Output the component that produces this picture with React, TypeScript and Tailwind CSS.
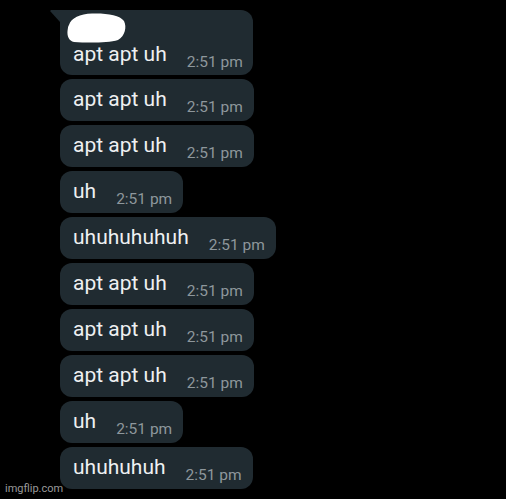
import React from "react";

const msgs = [
  "apt apt uh",
  "apt apt uh",
  "apt apt uh",
  "uh",
  "uhuhuhuhuh",
  "apt apt uh",
  "apt apt uh",
  "apt apt uh",
  "uh",
  "uhuhuhuh",
];

function Bubble({ text, first }: { text: string; first?: boolean }) {
  return (
    <div
      className={
        first
          ? "relative flex items-end h-[65px] pl-[13px] pr-[10px] rounded-[12px] rounded-tl-none bg-[#202b31]"
          : "relative flex items-end h-[42px] pl-[13px] pr-[11px] rounded-[12px] bg-[#202b31]"
      }
    >
      {first && (
        <>
          <svg
            className="absolute left-[-10px] top-0"
            width="10"
            height="12"
            viewBox="0 0 10 12"
          >
            <path d="M1 0 H10 V12 L0.5 1.5 Q0 0 1 0 Z" fill="#202b31" />
          </svg>
          <svg
            className="absolute left-[6px] top-[2px]"
            width="61"
            height="32"
            viewBox="0 0 61 32"
          >
            <path
              d="M3 13 C5 6 14 2 26 1.5 C40 1 54 3 58 9 C61 15 59 24 52 28 C42 31 22 31 8 30 C3 29 1 24 1.5 19 C2 16 2 14 3 13 Z"
              fill="#ffffff"
            />
          </svg>
        </>
      )}
      <span
        className={
          first
            ? "text-[21px] leading-[21px] text-[#eef0f1] mb-[10px] whitespace-pre"
            : "text-[21px] leading-[21px] text-[#eef0f1] mb-[11px] whitespace-pre"
        }
      >
        {text}
      </span>
      <span
        className={
          first
            ? "ml-[20px] text-[15.5px] leading-[15px] text-[#8e979c] mb-[5px] whitespace-pre"
            : "ml-[20px] text-[15.5px] leading-[15px] text-[#8e979c] mb-[6px] whitespace-pre"
        }
      >
        2:51 pm
      </span>
    </div>
  );
}

export default function App() {
  return (
    <div
      className="relative w-[506px] h-[499px] bg-black overflow-hidden"
      style={{ fontFamily: "Roboto, 'Noto Sans', sans-serif" }}
    >
      <div className="flex flex-col items-start gap-[4px] pl-[60px] pt-[10px]">
        {msgs.map((m, i) => (
          <Bubble key={i} text={m} first={i === 0} />
        ))}
      </div>
      <span className="absolute left-[5px] top-[482px] text-[11px] leading-[13px] text-[#9a9a9a]">
        imgflip.com
      </span>
    </div>
  );
}
